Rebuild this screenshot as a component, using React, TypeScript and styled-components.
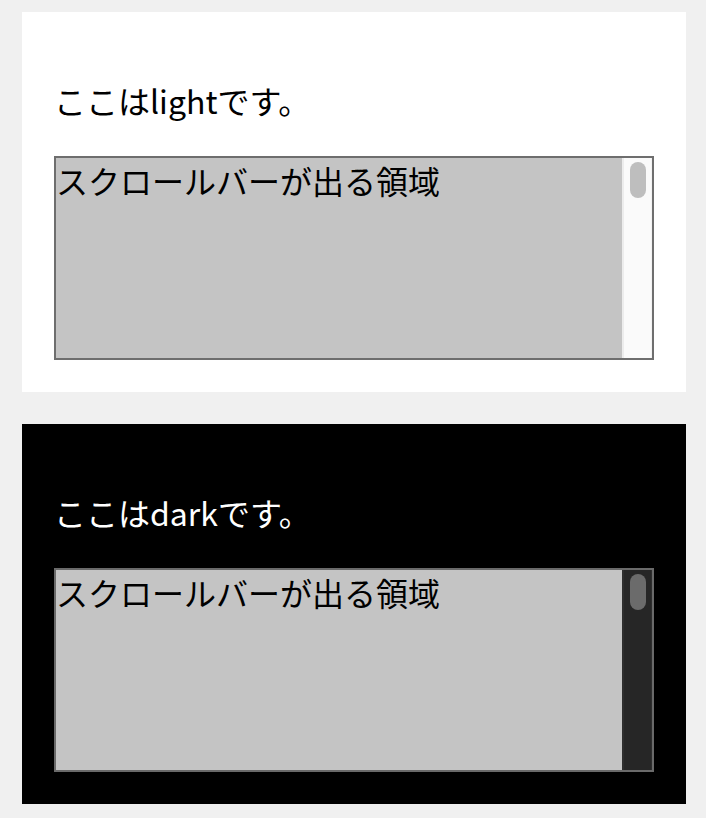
import React from "react";
import styled, { createGlobalStyle } from "styled-components";

const Global = createGlobalStyle`
  html, body { margin: 0; padding: 0; background: #f0f0f0; }
  body { font-family: "Noto Sans CJK JP", "Noto Sans", sans-serif; }
`;

const Page = styled.div`
  display: flex;
  flex-direction: column;
  gap: 32px;
  padding: 12px 20px 14px 22px;
`;

type Mode = { $dark?: boolean };

const Section = styled.section<Mode>`
  padding: 32px;
  background: ${(p) => (p.$dark ? "#000000" : "#ffffff")};
  color: ${(p) => (p.$dark ? "#ffffff" : "#000000")};
`;

const Title = styled.p`
  margin: 32px 0;
  font-size: 32px;
  line-height: 48px;
`;

const ScrollBox = styled.div<Mode>`
  display: flex;
  height: 200px;
  border: 2px solid ${(p) => (p.$dark ? "#6a6a6a" : "#6e6e6e")};
  background: #c4c4c4;
  color: #000;
`;

const Viewport = styled.div`
  flex: 1;
  overflow: hidden;
  font-size: 32px;
  line-height: 44px;
`;

const Track = styled.div<Mode>`
  width: 30px;
  box-sizing: border-box;
  padding: 4px 5px 0 6px;
  background: ${(p) => (p.$dark ? "#262626" : "#fafafa")};
  border-left: 2px solid ${(p) => (p.$dark ? "#2e2e2e" : "#ececec")};
  border-right: 1px solid ${(p) => (p.$dark ? "#2e2e2e" : "#f2f2f2")};
`;

const Thumb = styled.div<Mode>`
  height: 36px;
  border-radius: 8px;
  background: ${(p) => (p.$dark ? "#6b6b6b" : "#bebebe")};
`;

function Panel({ dark, label }: { dark?: boolean; label: string }) {
  return (
    <Section $dark={dark}>
      <Title>ここは{label}です。</Title>
      <ScrollBox $dark={dark}>
        <Viewport>スクロールバーが出る領域</Viewport>
        <Track $dark={dark}>
          <Thumb $dark={dark} />
        </Track>
      </ScrollBox>
    </Section>
  );
}

export default function App() {
  return (
    <>
      <Global />
      <Page>
        <Panel label="light" />
        <Panel dark label="dark" />
      </Page>
    </>
  );
}
